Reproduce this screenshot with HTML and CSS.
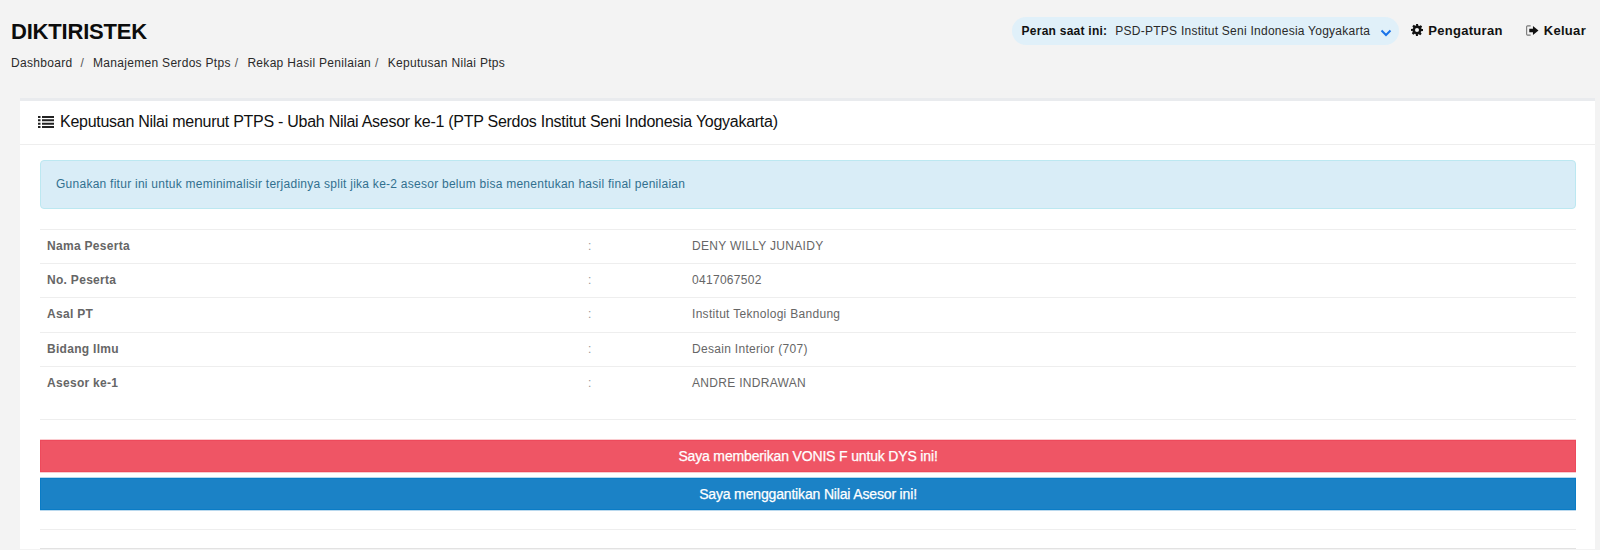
FILE: index.html
```html
<!DOCTYPE html>
<html lang="id">
<head>
<meta charset="utf-8">
<title>Keputusan Nilai Ptps</title>
<link rel="stylesheet" href="styles.css">
</head>
<body>
<header class="topbar">
  <div class="brand">
    <h1 class="title">DIKTIRISTEK</h1>
    <nav class="crumbs">
      <a>Dashboard</a><span class="sep sep-first">/</span>
      <a>Manajemen Serdos Ptps</a><span class="sep">/</span>
      <a>Rekap Hasil Penilaian</a><span class="sep">/</span>
      <a>Keputusan Nilai Ptps</a>
    </nav>
  </div>
  <div class="actions">
    <div class="role">
      <b class="role-label">Peran saat ini:</b>
      <span class="role-value">PSD-PTPS Institut Seni Indonesia Yogyakarta</span>
      <svg class="chev" viewBox="0 0 12 8" width="12" height="8"><path d="M1.5 1.5 6 6l4.5-4.5" fill="none" stroke="#1a73e8" stroke-width="2"/></svg>
    </div>
    <a class="action">
      <svg class="gear" viewBox="0 0 24 24" width="12" height="12"><path fill="#111" fill-rule="evenodd" d="M10 0h4l.7 3.4 1.9.8 2.9-1.9 2.8 2.8-1.9 2.9.8 1.9L24 10v4l-3.8.7-.8 1.9 1.9 2.9-2.8 2.8-2.9-1.9-1.9.8L14 24h-4l-.7-3.8-1.9-.8-2.9 1.9-2.8-2.8 1.9-2.9-.8-1.9L0 14v-4l3.8-.7.8-1.9-1.9-2.9 2.8-2.8 2.9 1.9 1.9-.8zM12 8a4 4 0 1 0 0 8 4 4 0 0 0 0-8z"/></svg>
      Pengaturan
    </a>
    <a class="action">
      <svg class="logout" viewBox="0 0 14 12" width="13" height="11"><path fill="none" stroke="#777" stroke-width="1.2" d="M5 1H1.6C1 1 .6 1.4.6 2v8c0 .6.4 1 1 1H5"/><path fill="#111" d="M3.5 4h4V1l6 5-6 5V8h-4z"/></svg>
      Keluar
    </a>
  </div>
</header>
<main class="card">
  <h2 class="card-title">
    <svg class="list-icon" viewBox="0 0 16 12" width="16" height="12"><path fill="#222" d="M0 0h2.5v2H0zM4 0h12v2H4zM0 3.3h2.5v2H0zM4 3.3h12v2H4zM0 6.7h2.5v2H0zM4 6.7h12v2H4zM0 10h2.5v2H0zM4 10h12v2H4z"/></svg>
    Keputusan Nilai menurut PTPS - Ubah Nilai Asesor ke-1 (PTP Serdos Institut Seni Indonesia Yogyakarta)
  </h2>
  <div class="card-body">
    <div class="alert">Gunakan fitur ini untuk meminimalisir terjadinya split jika ke-2 asesor belum bisa menentukan hasil final penilaian</div>
    <table class="info">
      <tr><th>Nama Peserta</th><td class="colon">:</td><td>DENY WILLY JUNAIDY</td></tr>
      <tr><th>No. Peserta</th><td class="colon">:</td><td>0417067502</td></tr>
      <tr><th>Asal PT</th><td class="colon">:</td><td>Institut Teknologi Bandung</td></tr>
      <tr><th>Bidang Ilmu</th><td class="colon">:</td><td>Desain Interior (707)</td></tr>
      <tr><th>Asesor ke-1</th><td class="colon">:</td><td>ANDRE INDRAWAN</td></tr>
    </table>
    <hr class="rule">
    <div class="buttons">
      <button class="btn btn-red">Saya memberikan VONIS F untuk DYS ini!</button>
      <button class="btn btn-blue">Saya menggantikan Nilai Asesor ini!</button>
    </div>
    <hr class="rule rule-tight">
    <hr class="rule rule-dark">
  </div>
</main>
</body>
</html>
```
FILE: styles.css
```css
* { box-sizing: border-box; }
html, body { height: 550px; overflow: hidden; }
body {
  margin: 0;
  background: #f3f3f3;
  color: #222;
  font-family: "Liberation Sans", Arial, sans-serif;
  font-size: 12px;
  line-height: 17px;
}
.topbar {
  display: flex;
  justify-content: space-between;
  align-items: flex-start;
  height: 98px;
  padding: 17px 14px 0 11px;
}
.brand { margin-top: 2px; }
.title {
  margin: 0;
  font-size: 22px;
  line-height: 26px;
  font-weight: 700;
  color: #0c0c0c;
  letter-spacing: -0.2px;
}
.crumbs {
  margin-top: 10px;
  display: flex;
  color: #2a2a2a;
  letter-spacing: 0.3px;
  white-space: nowrap;
}
.sep { margin: 0 9px 0 4px; color: #555; }
.sep-first { margin-left: 8px; }
.actions {
  display: flex;
  align-items: center;
  height: 28px;
}
.role {
  display: flex;
  align-items: center;
  height: 28px;
  padding: 0 7px 0 10px;
  border-radius: 14px;
  background: #e0f0f9;
  color: #2a2a2a;
  white-space: nowrap;
}
.role-label { font-weight: 700; color: #111; letter-spacing: 0.25px; }
.role-value { margin-left: 8px; letter-spacing: 0.25px; }
.chev { margin: 4px 0 0 10px; }
.action {
  display: flex;
  align-items: center;
  gap: 5px;
  margin-left: 12px;
  padding-bottom: 2px;
  font-size: 13px;
  font-weight: 700;
  color: #111;
  letter-spacing: 0.3px;
}
.action + .action { margin-left: 23px; }
.card {
  margin: 0 5px 0 20px;
  background: #fff;
  border-top: 3px solid #e9ebee;
}
.card-title {
  display: flex;
  align-items: center;
  gap: 6px;
  height: 44px;
  margin: 0;
  padding: 0 18px 2px;
  border-bottom: 1px solid #eee;
  font-size: 16px;
  font-weight: 400;
  letter-spacing: -0.27px;
  color: #111;
  white-space: nowrap;
}
.card-body { padding: 15px 19px 0 20px; }
.alert {
  height: 49px;
  padding: 15px;
  border: 1px solid #bce8f1;
  border-radius: 4px;
  background: #d9edf7;
  color: #31708f;
  letter-spacing: 0.257px;
}
.info {
  width: 100%;
  margin-top: 20px;
  border-collapse: collapse;
  table-layout: fixed;
  color: #666;
}
.info th, .info td {
  height: 34.2px;
  padding: 0 7px;
  border-top: 1px solid #eee;
  text-align: left;
  vertical-align: middle;
  letter-spacing: 0.3px;
}
.info th { width: 541px; font-weight: 700; }
.info .colon { width: 104px; color: #999; }
.rule {
  height: 0;
  margin: 19px 0 20px;
  border: 0;
  border-top: 1px solid #eee;
}
.rule-tight { margin-bottom: 18px; }
.rule-dark { margin: 0; border-top-color: #e2e2e2; }
.buttons { display: flex; flex-direction: column; gap: 6px; }
.btn {
  display: block;
  width: 100%;
  height: 32px;
  padding: 0;
  border: 1px solid #ed4a5c;
  background: #ef5565;
  box-shadow: 0 1px 0 rgba(239, 85, 101, 0.3), 0 -1px 0 rgba(239, 85, 101, 0.3);
  color: #fff;
  font-family: "Liberation Sans", Arial, sans-serif;
  font-size: 14px;
  font-weight: 400;
  letter-spacing: -0.16px;
  -webkit-text-stroke: 0.25px #fff;
}
.btn-blue {
  background: #1b82c6;
  border-color: #0a7cc6;
  box-shadow: 0 1px 0 rgba(27, 130, 198, 0.3), 0 -1px 0 rgba(27, 130, 198, 0.3);
}
```
